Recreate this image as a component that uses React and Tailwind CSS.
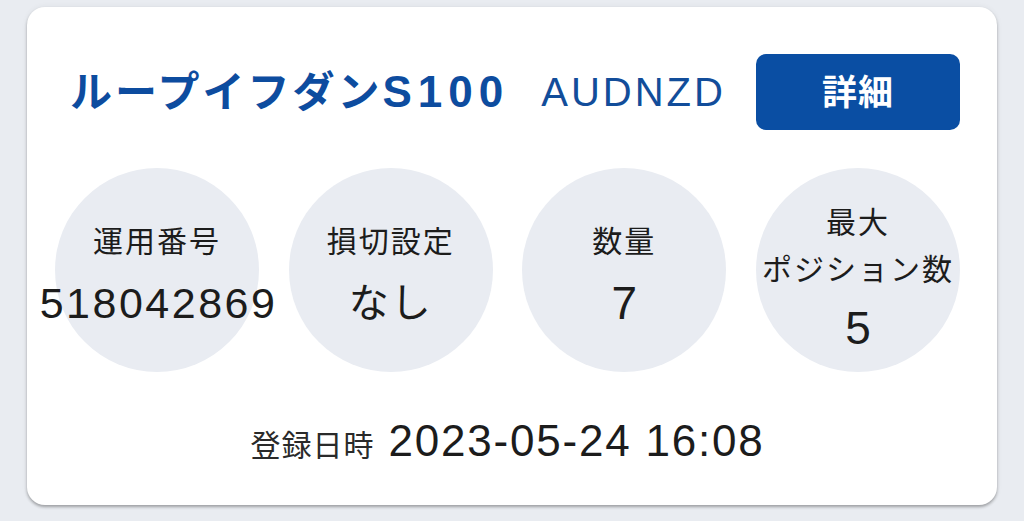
const FONT = "font-['Liberation_Sans','Noto_Sans_CJK_JP',sans-serif]";

const Circle = ({ children, className = "" }) => (
  <div className={`w-[204px] h-[204px] shrink-0 rounded-full bg-[#e9ecf2] flex flex-col items-center justify-center text-[#1c1c1c] ${className}`}>
    {children}
  </div>
);

const App = () => {
  return (
    <div className={`w-[1024px] h-[521px] bg-[#e9ecf1] pt-[7px] px-[27px] ${FONT}`}>
      <div className="h-[498px] bg-white rounded-[18px] shadow-[0_2px_3px_rgba(0,0,0,0.3),0_0_6px_rgba(0,0,0,0.06)] pt-[47px] pl-[28px] pr-[37px]">
        <div className="flex items-center h-[76px]">
          <div className="pl-[15px] flex items-center gap-[32px] flex-1">
            <span className="text-[42px] font-bold text-[#0d4c9f] leading-none whitespace-nowrap">
              <span className="tracking-[3px]">ループイフダン</span>
              <span className="text-[44px] tracking-[6px]">S100</span>
            </span>
            <span className="text-[40px] text-[#124d9a] tracking-[3px] leading-none">AUDNZD</span>
          </div>
          <button className="w-[204px] h-[76px] rounded-[10px] bg-[#0a4ea3] text-white text-[35px] font-bold tracking-[1px] leading-none">
            詳細
          </button>
        </div>

        <div className="mt-[38px] flex justify-between">
          <Circle className="pt-[10px]">
            <div className="text-[30px] tracking-[2px] leading-[40px]">運用番号</div>
            <div className="mt-[16px] text-[43px] tracking-[2.5px] leading-[50px] whitespace-nowrap pl-[3px]">518042869</div>
          </Circle>
          <Circle className="pt-[10px]">
            <div className="text-[30px] tracking-[2px] leading-[40px]">損切設定</div>
            <div className="mt-[16px] text-[40px] tracking-[2px] leading-[50px]">なし</div>
          </Circle>
          <Circle className="pt-[10px]">
            <div className="text-[30px] tracking-[2px] leading-[40px]">数量</div>
            <div className="mt-[16px] text-[46px] leading-[50px]">7</div>
          </Circle>
          <Circle className="pt-[14px]">
            <div className="text-[30px] tracking-[2px] leading-[44px]">最大</div>
            <div className="mt-[3px] text-[30px] tracking-[2px] leading-[44px] whitespace-nowrap -mx-[6px]">ポジション数</div>
            <div className="mt-[10px] text-[46px] leading-[52px]">5</div>
          </Circle>
        </div>

        <div className="mt-[44px] flex items-baseline justify-center gap-[14px] text-[#1c1c1c]">
          <span className="text-[30px] tracking-[1px] text-[#2a2a2a]">登録日時</span>
          <span className="text-[44px] tracking-[1.8px] leading-[50px]">2023-05-24 16:08</span>
        </div>
      </div>
    </div>
  );
};

export default App;
